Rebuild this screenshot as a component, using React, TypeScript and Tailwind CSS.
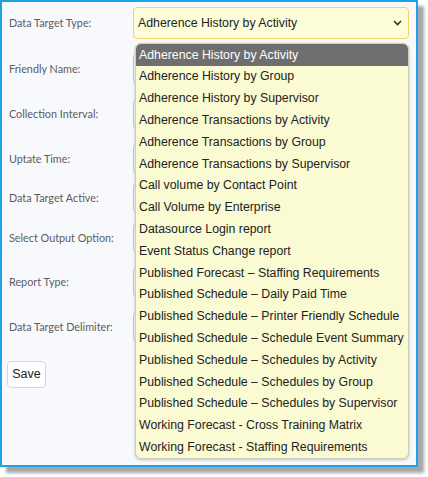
import React from "react";

const items = [
  "Adherence History by Activity",
  "Adherence History by Group",
  "Adherence History by Supervisor",
  "Adherence Transactions by Activity",
  "Adherence Transactions by Group",
  "Adherence Transactions by Supervisor",
  "Call volume by Contact Point",
  "Call Volume by Enterprise",
  "Datasource Login report",
  "Event Status Change report",
  "Published Forecast \u2013 Staffing Requirements",
  "Published Schedule \u2013 Daily Paid Time",
  "Published Schedule \u2013 Printer Friendly Schedule",
  "Published Schedule \u2013 Schedule Event Summary",
  "Published Schedule \u2013 Schedules by Activity",
  "Published Schedule \u2013 Schedules by Group",
  "Published Schedule \u2013 Schedules by Supervisor",
  "Working Forecast - Cross Training Matrix",
  "Working Forecast - Staffing Requirements",
];

const rows: { label: string; mt: string }[] = [
  { label: "Friendly Name:", mt: "mt-[14px]" },
  { label: "Collection Interval:", mt: "mt-[13px]" },
  { label: "Uptate Time:", mt: "mt-[13px]" },
  { label: "Data Target Active:", mt: "mt-[7px]" },
  { label: "Select Output Option:", mt: "mt-[8px]" },
  { label: "Report Type:", mt: "mt-[12px]" },
  { label: "Data Target Delimiter:", mt: "mt-[13px]" },
];

const labelCls =
  "w-[131px] pl-[7px] text-[10.8px] text-[#5c5c5c] font-['Lato','Open_Sans',sans-serif]";

export default function App() {
  return (
    <div className="w-[428px] h-[477px] bg-white">
      <div className="relative w-[418px] h-[467px] border-2 border-[#1fa2e4] bg-[#f8f9fc] shadow-[6px_6px_3px_rgba(0,0,0,0.35)]">
        <div className="flex flex-col pt-[5px]">
          <div className="flex items-center h-[32px]">
            <div className={labelCls}>Data Target Type:</div>
            <div className="relative w-[276px] h-[32px] rounded-[4px] border border-[#f2d36b] bg-[#fdfdd9] flex items-center pl-[4px] text-[12.3px] text-[#222] font-['Liberation_Sans',Arial,sans-serif]">
              Adherence History by Activity
              <svg
                className="absolute right-[6px] top-[12px]"
                width="9"
                height="6"
                viewBox="0 0 9 6"
              >
                <path d="M1 1 L4.5 4.5 L8 1" stroke="#333" strokeWidth="1.6" fill="none" />
              </svg>
            </div>
          </div>
          {rows.map((r) => (
            <div key={r.label} className={`flex items-center h-[32px] ${r.mt}`}>
              <div className={labelCls}>{r.label}</div>
              <div className="w-[276px] h-[30px] rounded-[4px] border border-[#c9c9c9] bg-white" />
            </div>
          ))}
          <div className="mt-[17px] pl-[5px]">
            <button className="h-[27px] w-[39px] rounded-[4px] border border-[#d6d6d6] bg-white text-[12.5px] text-[#222] font-['Liberation_Sans',Arial,sans-serif]">
              Save
            </button>
          </div>
        </div>

        <div className="absolute left-[133px] top-[41px] w-[274px] rounded-[6px] bg-[#fbfbd3] border border-[#cfcfc0] shadow-[0_1px_3px_rgba(0,0,0,0.25)] overflow-hidden font-['Liberation_Sans',Arial,sans-serif]">
          {items.map((it, i) => (
            <div
              key={it}
              className={`h-[21.8px] flex items-center pl-[3px] text-[12.3px] whitespace-nowrap ${
                i === 0 ? "bg-[#6e6e6e] text-white" : "text-[#222]"
              }`}
            >
              {it}
            </div>
          ))}
        </div>
      </div>
    </div>
  );
}
